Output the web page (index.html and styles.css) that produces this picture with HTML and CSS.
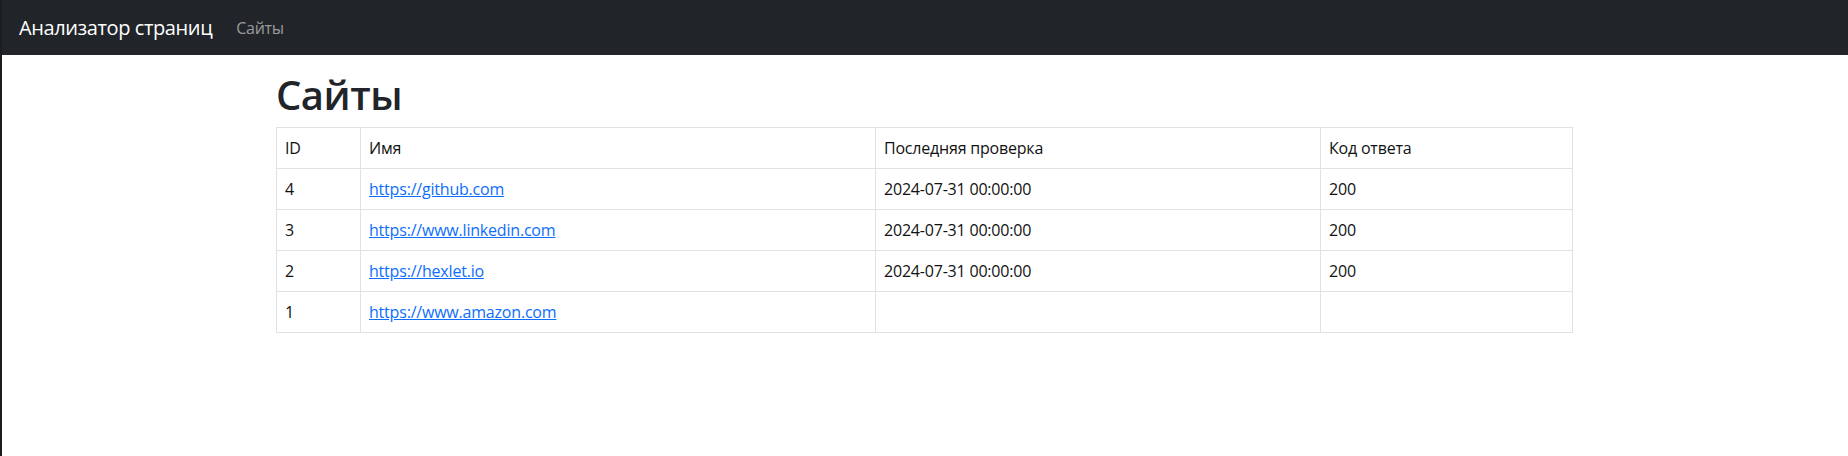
FILE: index.html
```html
<!DOCTYPE html>
<html lang="ru">
<head>
<meta charset="utf-8">
<title>Анализатор страниц</title>
<link rel="stylesheet" href="styles.css">
</head>
<body>
<nav class="navbar">
  <a class="brand" href="#">Анализатор страниц</a>
  <a class="nav-link" href="#">Сайты</a>
</nav>
<main class="container">
  <h1 class="title">Сайты</h1>
  <table class="table">
    <colgroup>
      <col class="c-id">
      <col class="c-name">
      <col class="c-date">
      <col class="c-code">
    </colgroup>
    <tbody>
      <tr><td>ID</td><td>Имя</td><td>Последняя проверка</td><td>Код ответа</td></tr>
      <tr><td>4</td><td><a href="#">https://github.com</a></td><td>2024-07-31 00:00:00</td><td>200</td></tr>
      <tr><td>3</td><td><a href="#">https://www.linkedin.com</a></td><td>2024-07-31 00:00:00</td><td>200</td></tr>
      <tr><td>2</td><td><a href="#">https://hexlet.io</a></td><td>2024-07-31 00:00:00</td><td>200</td></tr>
      <tr><td>1</td><td><a href="#">https://www.amazon.com</a></td><td></td><td></td></tr>
    </tbody>
  </table>
</main>
</body>
</html>
```
FILE: styles.css
```css
* { box-sizing: border-box; }
html, body { margin: 0; padding: 0; background: #fff; }
body {
  font-family: "Open Sans", "Noto Sans", sans-serif;
  font-size: 16px;
  line-height: 1.5;
  color: #212529;
  min-height: 456px;
}
body::before {
  content: "";
  position: fixed;
  left: 0; top: 0;
  width: 2px; height: 100%;
  background: #1c1d1f;
  z-index: 10;
}
.navbar {
  display: flex;
  align-items: center;
  height: 55px;
  padding: 0 19px;
  background: #212529;
}
.brand {
  font-size: 20px;
  line-height: 30px;
  letter-spacing: -0.4px;
  color: #fff;
  text-decoration: none;
  margin-right: 16px;
}
.nav-link {
  padding: 0 8px;
  color: rgba(255,255,255,.55);
  text-decoration: none;
  line-height: 24px;
  letter-spacing: -0.3px;
}
.container {
  width: 1320px;
  margin: 0 auto;
  padding: 16px 12px 0;
}
.title {
  margin: 0 0 8px;
  font-size: 40px;
  line-height: 48px;
  font-weight: 600;
  letter-spacing: -0.5px;
}
.table {
  width: 1296px;
  border-collapse: collapse;
  table-layout: fixed;
  color: #111;
}
.c-id { width: 84px; }
.c-name { width: 515px; }
.c-date { width: 445px; }
.c-code { width: 252px; }
.table td {
  border: 1px solid #dee2e6;
  padding: 8px;
  line-height: 24px;
  vertical-align: top;
  letter-spacing: -0.2px;
}
.table a { color: #0d6efd; text-decoration: underline; }
```
